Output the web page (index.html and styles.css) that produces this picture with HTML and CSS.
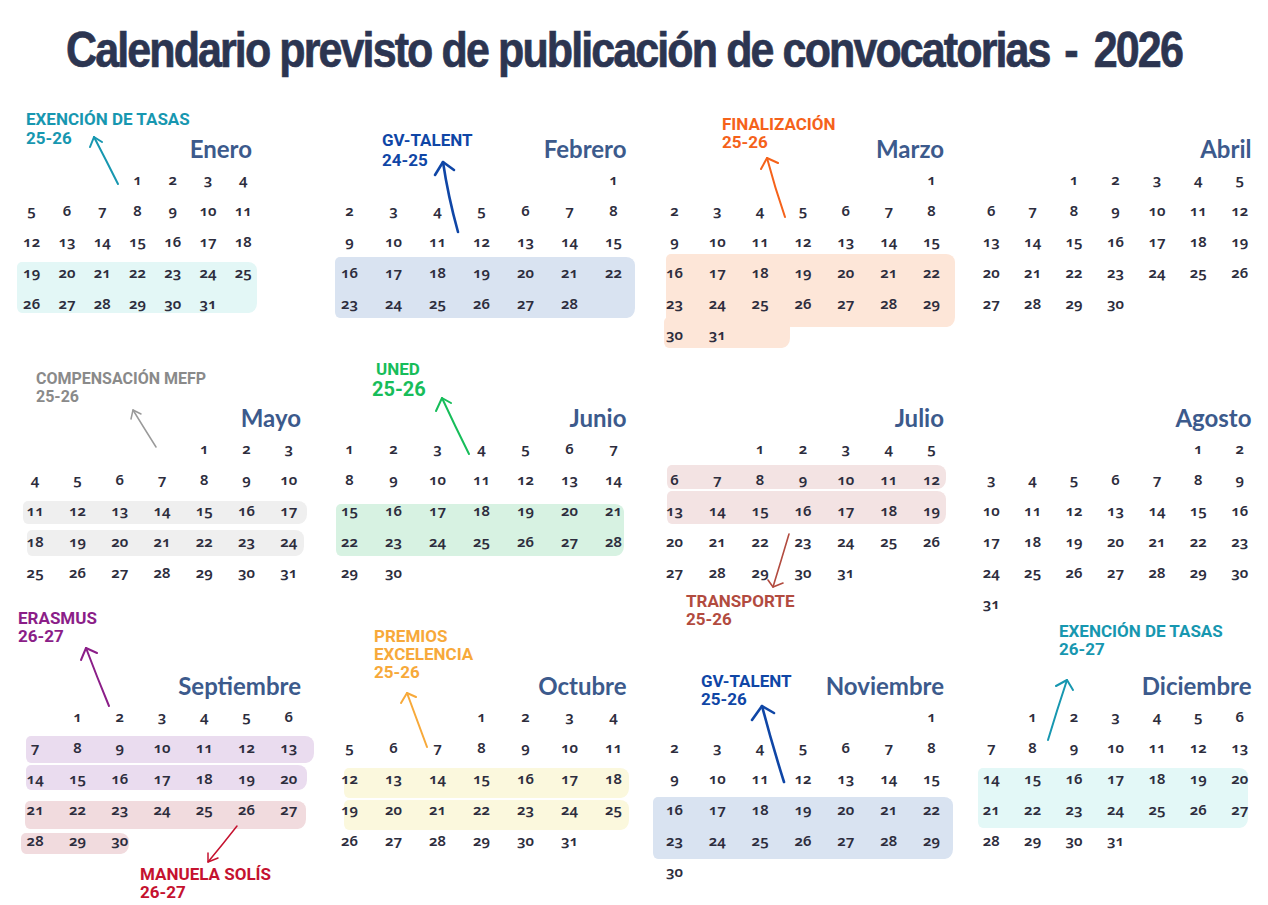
FILE: index.html
```html
<!DOCTYPE html>
<html lang="es">
<head>
<meta charset="utf-8">
<title>Calendario previsto de publicación de convocatorias - 2026</title>
<link rel="stylesheet" href="styles.css">
</head>
<body>
<div class="page">
  <header class="head">
    <h1 class="title">Calendario previsto de publicación de convocatorias<span class="dash">-</span>2026</h1>
  </header>

  <main class="cal">
    <!-- ENERO -->
    <section class="month m-jan">
      <h2 class="mname">Enero</h2>
      <div class="wk"><span></span><span></span><span></span><span>1</span><span>2</span><span>3</span><span>4</span></div>
      <div class="wk"><span>5</span><span>6</span><span>7</span><span>8</span><span>9</span><span>10</span><span>11</span></div>
      <div class="wk"><span>12</span><span>13</span><span>14</span><span>15</span><span>16</span><span>17</span><span>18</span></div>
      <div class="band b-jan">
        <div class="wk"><span>19</span><span>20</span><span>21</span><span>22</span><span>23</span><span>24</span><span>25</span></div>
        <div class="wk"><span>26</span><span>27</span><span>28</span><span>29</span><span>30</span><span>31</span><span></span></div>
      </div>
    </section>

    <!-- FEBRERO -->
    <section class="month">
      <h2 class="mname">Febrero</h2>
      <div class="wk"><span></span><span></span><span></span><span></span><span></span><span></span><span>1</span></div>
      <div class="wk"><span>2</span><span>3</span><span>4</span><span>5</span><span>6</span><span>7</span><span>8</span></div>
      <div class="wk"><span>9</span><span>10</span><span>11</span><span>12</span><span>13</span><span>14</span><span>15</span></div>
      <div class="band b-feb">
        <div class="wk"><span>16</span><span>17</span><span>18</span><span>19</span><span>20</span><span>21</span><span>22</span></div>
        <div class="wk"><span>23</span><span>24</span><span>25</span><span>26</span><span>27</span><span>28</span><span></span></div>
      </div>
    </section>

    <!-- MARZO -->
    <section class="month">
      <h2 class="mname">Marzo</h2>
      <div class="wk"><span></span><span></span><span></span><span></span><span></span><span></span><span>1</span></div>
      <div class="wk"><span>2</span><span>3</span><span>4</span><span>5</span><span>6</span><span>7</span><span>8</span></div>
      <div class="wk"><span>9</span><span>10</span><span>11</span><span>12</span><span>13</span><span>14</span><span>15</span></div>
      <div class="band b-mar">
        <div class="wk"><span>16</span><span>17</span><span>18</span><span>19</span><span>20</span><span>21</span><span>22</span></div>
        <div class="wk"><span>23</span><span>24</span><span>25</span><span>26</span><span>27</span><span>28</span><span>29</span></div>
      </div>
      <div class="band b-mar2">
        <div class="wk"><span>30</span><span>31</span><span></span><span></span><span></span><span></span><span></span></div>
      </div>
    </section>

    <!-- ABRIL -->
    <section class="month">
      <h2 class="mname">Abril</h2>
      <div class="wk"><span></span><span></span><span>1</span><span>2</span><span>3</span><span>4</span><span>5</span></div>
      <div class="wk"><span>6</span><span>7</span><span>8</span><span>9</span><span>10</span><span>11</span><span>12</span></div>
      <div class="wk"><span>13</span><span>14</span><span>15</span><span>16</span><span>17</span><span>18</span><span>19</span></div>
      <div class="wk"><span>20</span><span>21</span><span>22</span><span>23</span><span>24</span><span>25</span><span>26</span></div>
      <div class="wk"><span>27</span><span>28</span><span>29</span><span>30</span><span></span><span></span><span></span></div>
    </section>

    <!-- MAYO -->
    <section class="month">
      <h2 class="mname">Mayo</h2>
      <div class="wk"><span></span><span></span><span></span><span></span><span>1</span><span>2</span><span>3</span></div>
      <div class="wk"><span>4</span><span>5</span><span>6</span><span>7</span><span>8</span><span>9</span><span>10</span></div>
      <div class="band b-may1">
        <div class="wk"><span>11</span><span>12</span><span>13</span><span>14</span><span>15</span><span>16</span><span>17</span></div>
      </div>
      <div class="band b-may2">
        <div class="wk"><span>18</span><span>19</span><span>20</span><span>21</span><span>22</span><span>23</span><span>24</span></div>
      </div>
      <div class="wk"><span>25</span><span>26</span><span>27</span><span>28</span><span>29</span><span>30</span><span>31</span></div>
    </section>

    <!-- JUNIO -->
    <section class="month">
      <h2 class="mname">Junio</h2>
      <div class="wk"><span>1</span><span>2</span><span>3</span><span>4</span><span>5</span><span>6</span><span>7</span></div>
      <div class="wk"><span>8</span><span>9</span><span>10</span><span>11</span><span>12</span><span>13</span><span>14</span></div>
      <div class="band b-jun">
        <div class="wk"><span>15</span><span>16</span><span>17</span><span>18</span><span>19</span><span>20</span><span>21</span></div>
        <div class="wk"><span>22</span><span>23</span><span>24</span><span>25</span><span>26</span><span>27</span><span>28</span></div>
      </div>
      <div class="wk"><span>29</span><span>30</span><span></span><span></span><span></span><span></span><span></span></div>
    </section>

    <!-- JULIO -->
    <section class="month">
      <h2 class="mname">Julio</h2>
      <div class="wk"><span></span><span></span><span>1</span><span>2</span><span>3</span><span>4</span><span>5</span></div>
      <div class="band b-jul1">
        <div class="wk"><span>6</span><span>7</span><span>8</span><span>9</span><span>10</span><span>11</span><span>12</span></div>
      </div>
      <div class="band b-jul2">
        <div class="wk"><span>13</span><span>14</span><span>15</span><span>16</span><span>17</span><span>18</span><span>19</span></div>
      </div>
      <div class="wk"><span>20</span><span>21</span><span>22</span><span>23</span><span>24</span><span>25</span><span>26</span></div>
      <div class="wk"><span>27</span><span>28</span><span>29</span><span>30</span><span>31</span><span></span><span></span></div>
    </section>

    <!-- AGOSTO -->
    <section class="month">
      <h2 class="mname">Agosto</h2>
      <div class="wk"><span></span><span></span><span></span><span></span><span></span><span>1</span><span>2</span></div>
      <div class="wk"><span>3</span><span>4</span><span>5</span><span>6</span><span>7</span><span>8</span><span>9</span></div>
      <div class="wk"><span>10</span><span>11</span><span>12</span><span>13</span><span>14</span><span>15</span><span>16</span></div>
      <div class="wk"><span>17</span><span>18</span><span>19</span><span>20</span><span>21</span><span>22</span><span>23</span></div>
      <div class="wk"><span>24</span><span>25</span><span>26</span><span>27</span><span>28</span><span>29</span><span>30</span></div>
      <div class="wk"><span>31</span><span></span><span></span><span></span><span></span><span></span><span></span></div>
    </section>

    <!-- SEPTIEMBRE -->
    <section class="month">
      <h2 class="mname">Septiembre</h2>
      <div class="wk"><span></span><span>1</span><span>2</span><span>3</span><span>4</span><span>5</span><span>6</span></div>
      <div class="band b-sep1">
        <div class="wk"><span>7</span><span>8</span><span>9</span><span>10</span><span>11</span><span>12</span><span>13</span></div>
      </div>
      <div class="band b-sep2">
        <div class="wk"><span>14</span><span>15</span><span>16</span><span>17</span><span>18</span><span>19</span><span>20</span></div>
      </div>
      <div class="band b-sep3">
        <div class="wk"><span>21</span><span>22</span><span>23</span><span>24</span><span>25</span><span>26</span><span>27</span></div>
      </div>
      <div class="band b-sep4">
        <div class="wk"><span>28</span><span>29</span><span>30</span><span></span><span></span><span></span><span></span></div>
      </div>
    </section>

    <!-- OCTUBRE -->
    <section class="month">
      <h2 class="mname">Octubre</h2>
      <div class="wk"><span></span><span></span><span></span><span>1</span><span>2</span><span>3</span><span>4</span></div>
      <div class="wk"><span>5</span><span>6</span><span>7</span><span>8</span><span>9</span><span>10</span><span>11</span></div>
      <div class="band b-oct1">
        <div class="wk"><span>12</span><span>13</span><span>14</span><span>15</span><span>16</span><span>17</span><span>18</span></div>
      </div>
      <div class="band b-oct2">
        <div class="wk"><span>19</span><span>20</span><span>21</span><span>22</span><span>23</span><span>24</span><span>25</span></div>
      </div>
      <div class="wk"><span>26</span><span>27</span><span>28</span><span>29</span><span>30</span><span>31</span><span></span></div>
    </section>

    <!-- NOVIEMBRE -->
    <section class="month">
      <h2 class="mname">Noviembre</h2>
      <div class="wk"><span></span><span></span><span></span><span></span><span></span><span></span><span>1</span></div>
      <div class="wk"><span>2</span><span>3</span><span>4</span><span>5</span><span>6</span><span>7</span><span>8</span></div>
      <div class="wk"><span>9</span><span>10</span><span>11</span><span>12</span><span>13</span><span>14</span><span>15</span></div>
      <div class="band b-nov">
        <div class="wk"><span>16</span><span>17</span><span>18</span><span>19</span><span>20</span><span>21</span><span>22</span></div>
        <div class="wk"><span>23</span><span>24</span><span>25</span><span>26</span><span>27</span><span>28</span><span>29</span></div>
      </div>
      <div class="wk"><span>30</span><span></span><span></span><span></span><span></span><span></span><span></span></div>
    </section>

    <!-- DICIEMBRE -->
    <section class="month">
      <h2 class="mname">Diciembre</h2>
      <div class="wk"><span></span><span>1</span><span>2</span><span>3</span><span>4</span><span>5</span><span>6</span></div>
      <div class="wk"><span>7</span><span>8</span><span>9</span><span>10</span><span>11</span><span>12</span><span>13</span></div>
      <div class="band b-dec">
        <div class="wk"><span>14</span><span>15</span><span>16</span><span>17</span><span>18</span><span>19</span><span>20</span></div>
        <div class="wk"><span>21</span><span>22</span><span>23</span><span>24</span><span>25</span><span>26</span><span>27</span></div>
      </div>
      <div class="wk"><span>28</span><span>29</span><span>30</span><span>31</span><span></span><span></span><span></span></div>
    </section>
  </main>

  <div class="notes">
    <svg class="arrows" width="1268" height="905" viewBox="0 0 1268 905" fill="none" stroke-linecap="round" stroke-linejoin="round">
      <g stroke="#1797b0" stroke-width="2"><path d="M118 184 Q106 160 94 137"/><polyline points="90,147 94,137 102,142"/></g>
      <g stroke="#0f46a6" stroke-width="2.6"><path d="M458 232 Q448 196 443 162"/><polyline points="435,175 443,162 454,170"/></g>
      <g stroke="#f5621a" stroke-width="2"><path d="M785 217 Q775 188 767 158"/><polyline points="761,169 767,158 778,163"/></g>
      <g stroke="#9a9a9a" stroke-width="1.5"><path d="M156 447 Q144 428 133 410"/><polyline points="131,419 133,410 141,414"/></g>
      <g stroke="#17bd5a" stroke-width="2"><path d="M469 454 Q455 426 442 398"/><polyline points="436,411 442,398 451,403"/></g>
      <g stroke="#b24b3f" stroke-width="1.6"><path d="M789 534 Q781 561 773 587"/><polyline points="768,580 773,587 783,583"/></g>
      <g stroke="#8b1e88" stroke-width="2"><path d="M109 706 Q97 677 86 648"/><polyline points="81,660 86,648 97,653"/></g>
      <g stroke="#c5122f" stroke-width="1.5"><path d="M237 826 Q223 844 208 862"/><polyline points="208,853 208,862 218,858"/></g>
      <g stroke="#f7a93a" stroke-width="2"><path d="M427 747 Q417 720 407 693"/><polyline points="401,703 407,693 416,697"/></g>
      <g stroke="#0f46a6" stroke-width="2.6"><path d="M784 782 Q772 744 762 706"/><polyline points="752,720 762,706 774,713"/></g>
      <g stroke="#1797b0" stroke-width="2"><path d="M1048 740 Q1057 710 1067 680"/><polyline points="1056,686 1067,680 1073,690"/></g>
    </svg>

    <p class="note n-exen1">EXENCIÓN DE TASAS<br>25-26</p>
    <p class="note n-gv1">GV-TALENT<br>24-25</p>
    <p class="note n-fin">FINALIZACIÓN<br>25-26</p>
    <p class="note n-comp">COMPENSACIÓN MEFP<br>25-26</p>
    <p class="note n-uned">UNED<span class="big">25-26</span></p>
    <p class="note n-trans">TRANSPORTE<br>25-26</p>
    <p class="note n-eras">ERASMUS<br>26-27</p>
    <p class="note n-manu">MANUELA SOLÍS<br>26-27</p>
    <p class="note n-prem">PREMIOS<br>EXCELENCIA<br>25-26</p>
    <p class="note n-gv2">GV-TALENT<br>25-26</p>
    <p class="note n-exen2">EXENCIÓN DE TASAS<br>26-27</p>
  </div>
</div>
</body>
</html>
```

FILE: styles.css
```css
* { box-sizing: border-box; }

body {
  margin: 0;
  background: #ffffff;
}

.page {
  position: relative;
  width: 1268px;
  height: 905px;
  overflow: hidden;
  background: #ffffff;
}

/* ---------- title ---------- */
.head {
  height: 134px;
}

.title {
  margin: 0;
  padding: 22px 0 0 66px;
  font-family: "Liberation Sans", Arial, sans-serif;
  font-weight: 700;
  font-size: 50px;
  line-height: 56px;
  letter-spacing: -2.2px;
  color: #2c3551;
  -webkit-text-stroke: 0.7px #2c3551;
  white-space: nowrap;
  transform: scaleX(0.86);
  transform-origin: 66px 0;
}

.dash {
  padding: 0 20px 0 17px;
}

/* ---------- calendar grid ---------- */
.cal {
  display: grid;
  grid-template-columns: 296px 308px 300px 290px;
  grid-auto-rows: 268.5px;
  column-gap: 17.5px;
  padding-left: 14px;
}

.month {
  isolation: isolate;
}

.m-jan {
  width: 247px;
}

.mname {
  margin: 0;
  height: 30px;
  padding-right: 9px;
  text-align: right;
  font-family: Lato, "Open Sans", sans-serif;
  font-weight: 700;
  font-size: 24px;
  line-height: 30px;
  color: #3c5a8c;
}

.wk {
  display: grid;
  grid-template-columns: repeat(7, 1fr);
  height: 31px;
  text-align: center;
  font-family: "Noto Sans", "DejaVu Sans", sans-serif;
  font-weight: 600;
  font-size: 15px;
  line-height: 31px;
  font-variant-numeric: oldstyle-nums;
  color: #2d2d3d;
}

/* ---------- painted highlight bands ---------- */
.band {
  position: relative;
}

.band::before {
  content: "";
  position: absolute;
  z-index: -1;
  top: var(--t, 4px);
  bottom: var(--b, 2px);
  left: var(--l, 3px);
  right: var(--r, 3px);
  background: var(--c, #eee);
  border-radius: 5px 9px 8px 5px / 5px 8px 10px 6px;
}

.b-jan  { --c: #e3f7f6; --t: 5px;  --b: 6px;  --l: 3px;  --r: 4px; }
.b-feb  { --c: #d9e3f1; --t: 0px;  --b: 1px;  --l: 7px;  --r: 1px; }
.b-mar  { --c: #fde6d8; --t: -3px; --b: -8px; --l: 13px; --r: -2px; }
.b-mar2 { --c: #fde6d8; --t: -2px; --b: 2px;  --l: 11px; --r: 163px; }
.b-may1 { --c: #efefef; --t: 6px;  --b: 2px;  --l: 9px;  --r: 3px; }
.b-may2 { --c: #efefef; --t: 4px;  --b: 1px;  --l: 13px; --r: 6px; }
.b-jun  { --c: #d7f2e2; --t: 9px;  --b: 1px;  --l: 8px;  --r: 12px; }
.b-jul1 { --c: #f3e3e3; --t: 1px;  --b: 6px;  --l: 14px; --r: 7px; }
.b-jul2 { --c: #f3e3e3; --t: -4px; --b: 2px;  --l: 14px; --r: 7px; }
.b-sep1 { --c: #eadcef; --t: 4px;  --b: 0px;  --l: 12px; --r: -4px; }
.b-sep2 { --c: #eadcef; --t: 2px;  --b: 4px;  --l: 12px; --r: 3px; }
.b-sep3 { --c: #f1dbde; --t: 7px;  --b: -4px; --l: 11px; --r: 4px; }
.b-sep4 { --c: #f1dbde; --t: 8px;  --b: 2px;  --l: 7px;  --r: 181px; }
.b-oct1 { --c: #fbf8dd; --t: 5px;  --b: -4px; --l: 16px; --r: 7px; }
.b-oct2 { --c: #fbf8dd; --t: 6px;  --b: -5px; --l: 16px; --r: 7px; }
.b-nov  { --c: #d9e3f1; --t: 3px;  --b: -3px; --l: 0px;  --r: 0px; }
.b-dec  { --c: #e3f8f7; --t: 5px;  --b: -3px; --l: 7px;  --r: 13px; }

/* ---------- annotations ---------- */
.notes {
  position: absolute;
  inset: 0;
  pointer-events: none;
}

.arrows {
  position: absolute;
  left: 0;
  top: 0;
}

.note {
  position: absolute;
  margin: 0;
  font-family: Roboto, "Liberation Sans", sans-serif;
  font-weight: 700;
  font-size: 17px;
  line-height: 18px;
  white-space: nowrap;
}

.n-exen1 { left: 26px;   top: 110px; line-height: 19px; color: #1797b0; }
.n-gv1   { left: 382px;  top: 130px; line-height: 20px; color: #0f46a6; }
.n-fin   { left: 722px;  top: 115px; color: #f5621a; }
.n-comp  { left: 36px;   top: 370px; font-size: 16px; color: #8a8a8a; }
.n-uned  { left: 376px;  top: 360px; color: #17bd5a; }
.n-trans { left: 686px;  top: 592px; color: #b24b3f; }
.n-eras  { left: 18px;   top: 609px; color: #8b1e88; }
.n-manu  { left: 140px;  top: 865px; color: #c5122f; }
.n-prem  { left: 374px;  top: 627px; color: #f7a93a; }
.n-gv2   { left: 701px;  top: 672px; color: #0f46a6; }
.n-exen2 { left: 1059px; top: 622px; color: #1797b0; }

.big {
  display: block;
  margin-left: -4px;
  margin-top: 1px;
  font-size: 20px;
  line-height: 21px;
}
```
